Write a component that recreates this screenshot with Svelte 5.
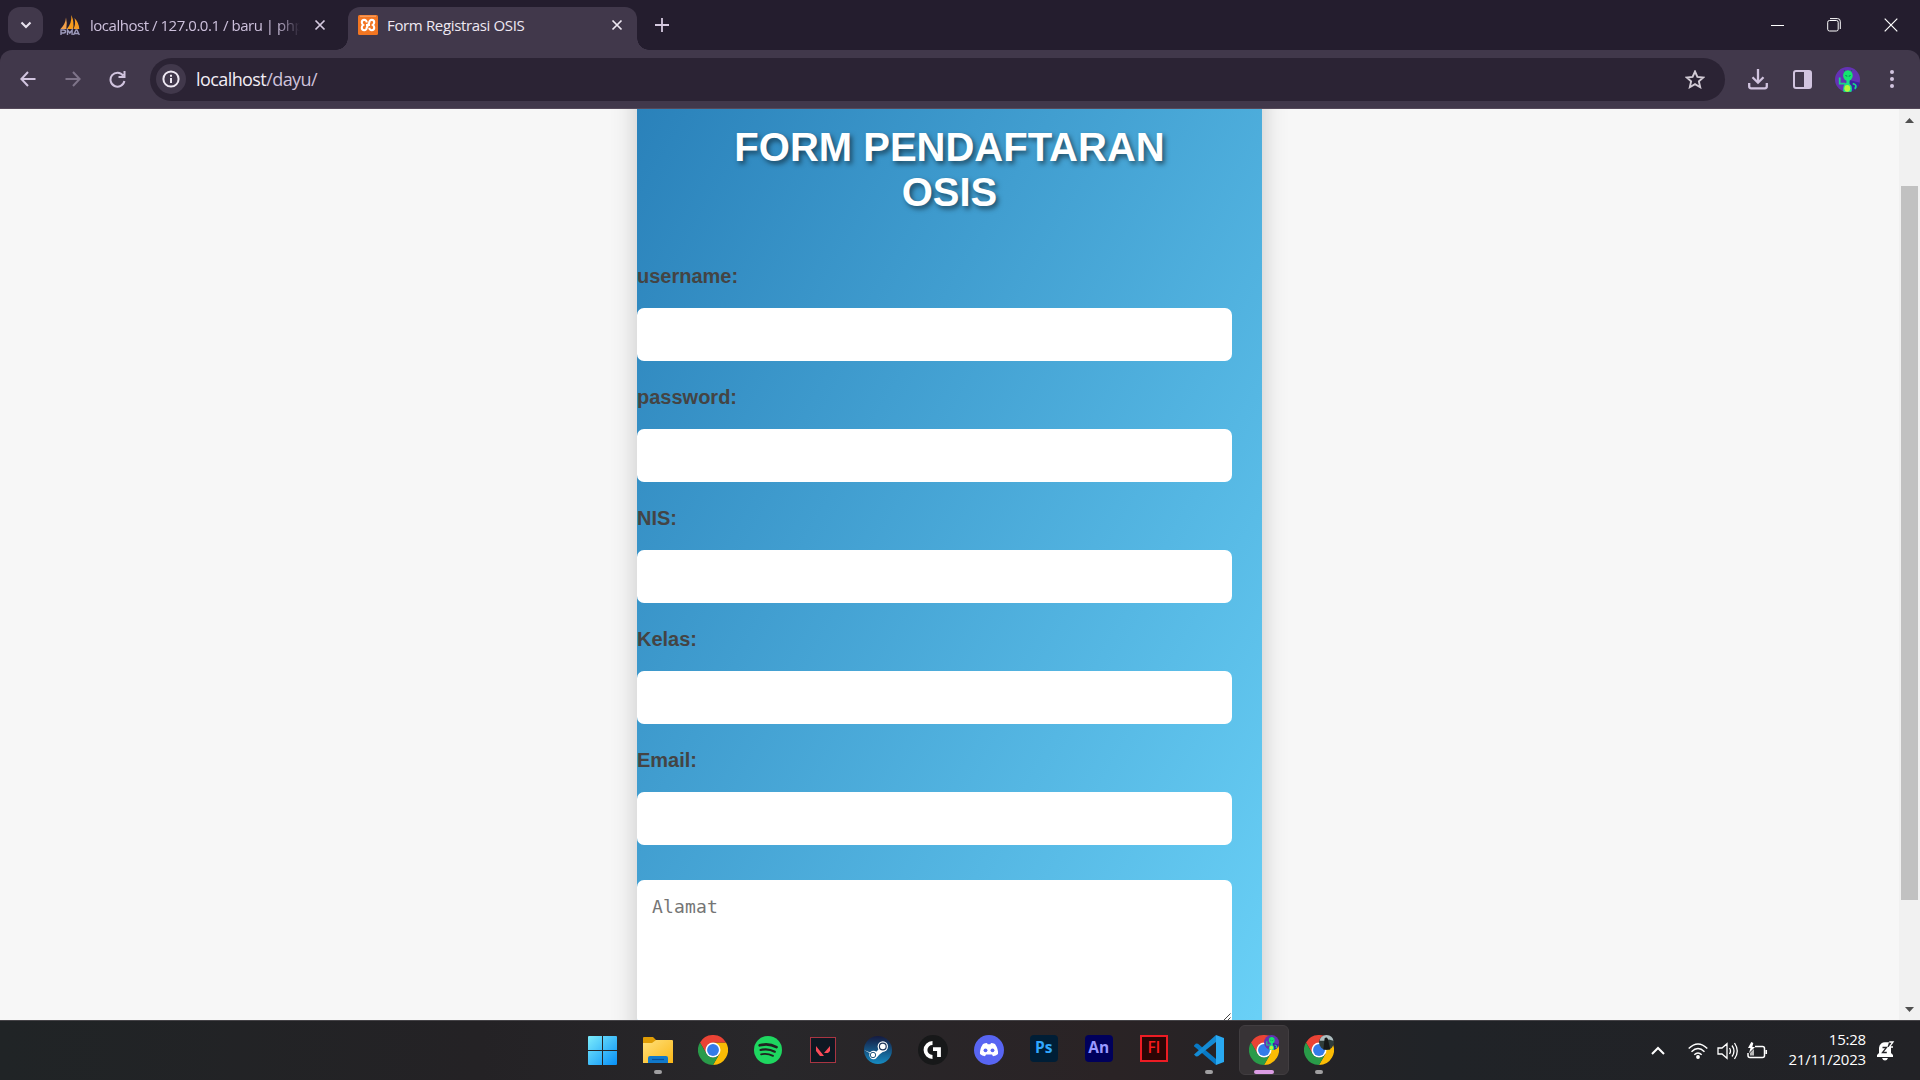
<script>
  const fields = ['username:', 'password:', 'NIS:', 'Kelas:', 'Email:'];
</script>

{#snippet alien()}
  <circle cx="12" cy="12" r="12" fill="#6432b4" />
  <path d="M12 12 24 15A12 12 0 0 1 12 24Z" fill="#3b22a0" />
  <path d="M4.5 10v6H10M17 16q5 1 2 5" fill="none" stroke="#19d786" stroke-width="1.7" />
  <ellipse cx="12.4" cy="8.2" rx="4.6" ry="5" fill="#13e56f" />
  <path d="M11 12h3v4q3 2 2 7.4a12 12 0 0 1-8 0Q7 17 11 15Z" fill="#18df86" />
  <ellipse cx="11.8" cy="20.5" rx="2.8" ry="3.3" fill="#b8f53a" />
  <path d="m10 8 1.8 1M15 8l-1.8 1M9.5 4 8.5 3M15.5 4l1-1" stroke="#087c58" />
{/snippet}

{#snippet chrome()}
  <svg width="30" height="30" viewBox="0 0 48 48">
    <path d="M24 12h20.8A24 24 0 0 1 24 48l10.4-18Z" fill="#fbbc05" />
    <path d="M3.2 12A24 24 0 0 1 44.8 12H24L13.6 18v12Z" fill="#ea4335" />
    <path d="M3.2 12 13.6 30A12 12 0 0 0 34.4 30L24 48A24 24 0 0 1 3.2 12Z" fill="#299b49" />
    <circle cx="24" cy="24" r="12" fill="#fff" />
    <circle cx="24" cy="24" r="9.5" fill="#347be9" />
  </svg>
{/snippet}

<div class="screen">
  <header class="tabs">
    <button class="tabsearch" aria-label="Search tabs"><svg width="12" height="12" viewBox="0 0 12 12"><path d="m1.5 3.5 4.5 4.5 4.5-4.5" fill="none" stroke="#e8e2ee" stroke-width="2.1" /></svg></button>
    <div class="tab first">
      <svg width="20" height="20" viewBox="0 0 20 20">
        <path d="M.5 14Q5.5 9 6 2.5q1.5 6 .3 11.5Z" fill="#f3a04a" /><path d="M6.8 14Q12 8 11.3 0 14.5 7 13 14Z" fill="#f89c1c" /><path d="M13.5 14q2.5-5 1-11 4.5 5 4.8 11Z" fill="#f59a24" />
        <path d="M1 20v-5h2.5q2 0 2 1.5t-2 1.5H1M7.5 20v-5l2.3 3 2.3-3v5M13.5 20l2.5-5h1l2.3 5M14.5 18.5h4" fill="none" stroke="#9d9abb" stroke-width="1.4" />
      </svg>
      <span class="tabtitle faded">localhost / 127.0.0.1 / baru | php</span>
      <svg class="x" width="12" height="12" viewBox="0 0 12 12"><path d="m1.5 1.5 9 9m0-9-9 9" stroke="#d5c9df" stroke-width="1.7" /></svg>
    </div>
    <div class="tab active">
      <svg width="20" height="20" viewBox="0 0 20 20">
        <rect width="20" height="20" rx="1.5" fill="#f37622" /><path d="M2 1.2h16" stroke="#f7ac76" />
        <path d="M8.7 7.4C8.7 4 3.8 4.2 3.8 7.3Q3.8 9 5.2 10 3.8 11 3.8 12.7c0 3.2 4.9 3.4 4.9 0L11.3 7.4C11.3 4 16.2 4.2 16.2 7.3q0 1.7-1.4 2.7 1.4 1 1.4 2.7c0 3.2-4.9 3.4-4.9 0M8 10h4" fill="none" stroke="#fff" stroke-width="2.1" />
      </svg>
      <span class="tabtitle">Form Registrasi OSIS</span>
      <svg class="x" width="12" height="12" viewBox="0 0 12 12"><path d="m1.5 1.5 9 9m0-9-9 9" stroke="#eee8f2" stroke-width="1.7" /></svg>
    </div>
    <svg class="plus" width="14" height="14" viewBox="0 0 14 14"><path d="M7 0v14M0 7h14" stroke="#d5c9df" stroke-width="1.8" /></svg>
    <div class="window">
      <svg width="13" height="13" viewBox="0 0 13 13"><path d="M0 6.5h13" stroke="#fff" /></svg>
      <svg width="14" height="14" viewBox="0 0 14 14" fill="none" stroke="#fff"><rect x=".7" y="2.5" width="10.5" height="10.5" rx="1.8" /><path d="M3 .6h7.5q2.8 0 2.8 2.8V11" /></svg>
      <svg width="14" height="14" viewBox="0 0 14 14"><path d="m.7.7 12.6 12.6m0-12.6L.7 13.3" stroke="#fff" stroke-width="1.2" /></svg>
    </div>
  </header>

  <nav class="toolbar">
    <svg width="16" height="16" viewBox="0 0 16 16" fill="none" stroke="#d1c4df" stroke-width="2"><path d="M15.5 8H2M8 1 1.4 8 8 15" /></svg>
    <svg width="16" height="16" viewBox="0 0 16 16" fill="none" stroke="#7e7489" stroke-width="2"><path d="M.5 8H14M8 1l6.6 7L8 15" /></svg>
    <svg class="reload" width="17" height="17" viewBox="0 0 17 17" fill="none" stroke="#d1c4df" stroke-width="2"><path d="M14.2 4.6A7 7 0 1 0 15.4 10M15.5 0v6H9.5" /></svg>
    <div class="address">
      <span class="info"><svg width="18" height="18" viewBox="0 0 18 18" fill="none" stroke="#eee8f2" stroke-width="2"><circle cx="9" cy="9" r="7.6" /><path d="M9 8v5M9 4.7v2" /></svg></span>
      <span class="url">localhost<i>/dayu/</i></span>
      <svg class="star" width="20" height="19" viewBox="0 0 20 19"><path d="m10 1.5 2.4 5.4 5.9.6-4.4 3.9 1.3 5.8-5.2-3-5.2 3 1.3-5.8L1.7 7.5l5.9-.6Z" fill="none" stroke="#d2cbd5" stroke-width="1.9" /></svg>
    </div>
    <div class="actions">
      <svg width="20" height="21" viewBox="0 0 20 21" fill="none" stroke="#d1c4df" stroke-width="2.3"><path d="M10 0v13M4.5 8.2l5.5 5.5 5.5-5.5M1.2 14v3.3q0 2 2 2h13.6q2 0 2-2V14" /></svg>
      <svg width="19" height="19" viewBox="0 0 19 19"><rect x="1" y="1" width="17" height="17" rx="2" fill="none" stroke="#d1c4df" stroke-width="2" /><path d="M11 1h6q1 0 1 1v15q0 1-1 1h-6Z" fill="#d1c4df" /></svg>
      <svg width="25" height="25" viewBox="0 0 24 24">{@render alien()}</svg>
      <svg class="dots" width="4" height="18" viewBox="0 0 4 18" fill="#d1c4df"><circle cx="2" cy="2" r="2" /><circle cx="2" cy="9" r="2" /><circle cx="2" cy="16" r="2" /></svg>
    </div>
  </nav>

  <main>
    <div class="viewport">
      <form>
        <h1>FORM PENDAFTARAN OSIS</h1>
        {#each fields as field, i}
          <label for="field{i}">{field}</label>
          <input id="field{i}" />
        {/each}
        <div class="area">
          <textarea placeholder="Alamat"></textarea>
          <svg class="grip" width="7" height="7" viewBox="0 0 7 7"><path d="M0 7 6.5.5M4 7l2.5-2.5" stroke="#444" /></svg>
        </div>
      </form>
    </div>
    <div class="scroll">
      <svg width="9" height="5" viewBox="0 0 9 5"><path d="M4.5 0 9 5H0Z" fill="#505050" /></svg>
      <div class="thumb"></div>
      <svg width="9" height="5" viewBox="0 0 9 5"><path d="M4.5 5 9 0H0Z" fill="#505050" /></svg>
    </div>
  </main>

  <footer>
    <div class="apps">
      <span class="app"><svg width="29" height="29" viewBox="0 0 29 29">
        <defs><linearGradient id="win" gradientUnits="userSpaceOnUse" x1="0" y1="0" x2="29" y2="29"><stop stop-color="#7cecfb" /><stop offset="1" stop-color="#0790f8" /></linearGradient></defs>
        <path d="M1 0h13v14H0V1q0-1 1-1ZM15 0h13q1 0 1 1v13H15ZM0 15h14v14H1q-1 0-1-1ZM15 15h14v13q0 1-1 1H15Z" fill="url(#win)" />
      </svg></span>
      <span class="app running"><svg width="30" height="30" viewBox="0 0 30 30">
        <defs><linearGradient id="fold" x2="1" y2="1"><stop stop-color="#ffe07b" /><stop offset="1" stop-color="#fbb716" /></linearGradient></defs>
        <path d="M0 3q0-1 1-1h9l3 3v5H0Z" fill="#df9c05" /><path d="M0 8h9l4-3h16q1 0 1 1v22H0Z" fill="url(#fold)" />
        <path d="M5 28v-5q0-2 2-2h16q2 0 2 2v5Z" fill="#1179cb" /><path d="M9 24.5h12" stroke="#074f9c" stroke-width="1.2" />
      </svg></span>
      <span class="app">{@render chrome()}</span>
      <span class="app"><svg width="28" height="28" viewBox="0 0 28 28"><circle cx="14" cy="14" r="14" fill="#1ed760" /><g fill="none" stroke="#202321" stroke-linecap="round"><path d="M5.7 9.3q9-2.4 16.8 1.8" stroke-width="2.7" /><path d="M6.6 14q7.5-2 14.2 1.7" stroke-width="2.2" /><path d="M7.1 18.3q6.3-1.4 11.9 1.6" stroke-width="1.8" /></g></svg></span>
      <span class="app"><svg width="26" height="26" viewBox="0 0 26 26"><rect x=".5" y=".5" width="25" height="25" fill="#0e1822" stroke="#a93542" /><path d="m6 9 8 10h-4l-4-5ZM20 9v5l-2 2h-4Z" fill="#fa4b59" /></svg></span>
      <span class="app"><svg width="28" height="28" viewBox="0 0 28 28">
        <defs><linearGradient id="steam" x2="0" y2="1"><stop stop-color="#151a40" /><stop offset="1" stop-color="#168bc2" /></linearGradient></defs>
        <circle cx="14" cy="14" r="14" fill="url(#steam)" /><path d="m0 14 10 4 4-4 4-6 5 5-7 5-3 3" fill="#fff" /><circle cx="9.5" cy="19" r="4.2" fill="#fff" /><circle cx="9" cy="19" r="2.7" fill="#fff" stroke="#245980" /><circle cx="18.8" cy="10.5" r="5.2" fill="#fff" /><circle cx="18.8" cy="10.5" r="3.4" fill="#fff" stroke="#1c3458" stroke-width="1.2" />
      </svg></span>
      <span class="app"><svg width="30" height="30" viewBox="0 0 30 30"><circle cx="15" cy="15" r="15" fill="#171819" /><path d="M14.5 8a7 7 0 0 0 0 14M15 14.2H21V22" fill="none" stroke="#fff" stroke-width="3.8" /></svg></span>
      <span class="app"><svg width="30" height="30" viewBox="0 0 30 30"><circle cx="15" cy="15" r="15" fill="#5865f2" /><path d="M9 9q2-1 4-1l.7 1.3h2.6L17 8q2 0 4 1 3.4 5 3 10-2 2-5 2.3L18 19.5h-6l-1 1.8Q8 21 6 19q-.4-5 3-10Z" fill="#fff" /><circle cx="11.5" cy="15.3" r="1.9" fill="#5865f2" /><circle cx="18.5" cy="15.3" r="1.9" fill="#5865f2" /></svg></span>
      <span class="app"><b class="adobe ps">Ps</b></span>
      <span class="app"><b class="adobe an">An</b></span>
      <span class="app"><b class="adobe fl">Fl</b></span>
      <span class="app running"><svg width="30" height="30" viewBox="0 0 30 30"><path d="m0 10.5 2-2 2 .2L22 24v6L.3 11.5Z" fill="#0879c5" /><path d="M0 19.5 22 0v7L4 21.3l-2 .2Z" fill="#148bd4" /><path d="m22 0 8 3v24l-8 3Z" fill="#29a9f1" /></svg></span>
      <span class="app current">{@render chrome()}<svg class="badge" width="15" height="15" viewBox="0 0 24 24">{@render alien()}</svg></span>
      <span class="app running">{@render chrome()}<svg class="badge" width="15" height="15" viewBox="0 0 24 24"><circle cx="12" cy="12" r="12" fill="#303d3b" /><path d="M1 9Q2 1 12 0q10 1 11 9l-7-2-7 2Z" fill="#aebdc0" /><path d="M9 5q5-3 6 5l3 13H7Z" fill="#161818" /></svg></span>
    </div>
    <div class="tray">
      <svg width="14" height="9" viewBox="0 0 14 9"><path d="m1 8 6-6 6 6" fill="none" stroke="#fff" stroke-width="2" /></svg>
      <svg width="20" height="16" viewBox="0 0 20 16" fill="none" stroke="#fff" stroke-width="1.4"><path d="M.7 5.5q9.3-9 18.6 0M3.5 8.7q6.5-6.5 13 0M6.3 11.7q3.7-3.5 7.4 0" /><circle cx="10" cy="14" r="1.2" fill="#fff" /></svg>
      <svg width="21" height="18" viewBox="0 0 21 18" fill="none" stroke="#fff" stroke-width="1.3"><path d="M1 6h4l5-4.3v14.6L5 12H1ZM12.5 6q2 3 0 6M15 3.5q4 5.5 0 11M17.5 1q5.5 8 0 16" /></svg>
      <svg width="21" height="18" viewBox="0 0 21 18" fill="none" stroke="#fff" stroke-width="1.5"><path d="M8 4.5h7.5q2 0 2 2v7q0 2-2 2H3q-2 0-2-2V11M19.3 8v4" /><path d="M4.3 0 1 6h2.5L2 11l6-6H5.3l1-4Z" fill="#fff" stroke="none" /><path d="M3 13.5V11l4-4v6.5Z" fill="#bbb" stroke="none" /></svg>
      <div class="clock"><span>15:28</span><span>21/11/2023</span></div>
      <svg width="18" height="20" viewBox="0 0 18 20"><path d="M0 16v-2l2-2V7a6 6 0 0 1 7-5.7h3L10.5 6H14v6l2 2v2ZM5 17h6q-1 2.5-3 2.5T5 17Z" fill="#fff" /><path d="M5.5 6.5h4l-4 5h4.3" fill="none" stroke="#252529" stroke-width="1.3" /><path d="M12.3 1H16l-3.7 5H16" fill="none" stroke="#fff" stroke-width="1.3" /></svg>
    </div>
  </footer>
</div>

<style>
  :global(body) { overflow: hidden; }
  * { box-sizing: border-box; }
  svg { display: block; flex: none; }
  .screen { width: 1920px; height: 1080px; display: grid; grid-template-rows: 50px 59px 911px 60px; overflow: hidden; background: #241d2e; font-family: "Open Sans", "Noto Sans", sans-serif; }
  .tabs { display: flex; align-items: center; padding-left: 8px; }
  .tabsearch { width: 35px; height: 36px; border: 0; border-radius: 12px; background: #41384b; display: grid; place-items: center; padding: 0; }
  .tab { display: flex; align-items: center; color: #cdc0dc; font-size: 15px; letter-spacing: -0.35px; }
  .first { width: 305px; height: 50px; padding: 0 22px 0 17px; }
  .tabtitle { white-space: nowrap; flex: 1; margin-left: 9px; }
  .faded { flex: none; width: 212px; margin-left: 10px; letter-spacing: -0.47px; mask-image: linear-gradient(90deg, #000 88%, transparent 99%); }
  .x { margin-left: auto; }
  .active { position: relative; align-self: flex-end; width: 289px; height: 43px; padding: 0 14px 7px 10px; background: #41384b; border-radius: 12px 12px 0 0; color: #eee8f2; }
  .active::before, .active::after { content: ''; position: absolute; bottom: 0; width: 12px; height: 12px; }
  .active::before { left: -12px; background: radial-gradient(circle at 0 0, transparent 11.5px, #41384b 12px); }
  .active::after { right: -12px; background: radial-gradient(circle at 100% 0, transparent 11.5px, #41384b 12px); }
  .plus { margin-left: 18px; }
  .window { margin-left: auto; display: flex; align-items: center; gap: 43px; padding-right: 22px; }
  .toolbar { background: #41384b; border-bottom: 1px solid #55495a; border-radius: 12px 12px 0 0; display: flex; align-items: center; padding: 0 0 0 20px; gap: 29px; }
  .reload { margin-left: -1px; }
  .address { width: 1575px; height: 43px; margin-left: -5px; border-radius: 22px; background: #2b2334; display: flex; align-items: center; padding: 0 20px 0 6px; }
  .info { width: 30px; height: 30px; border-radius: 50%; background: #41384b; display: grid; place-items: center; }
  .url { margin-left: 10px; font-size: 18px; letter-spacing: -0.58px; color: #f2edf5; }
  .url i { font-style: normal; color: #cfc2dc; }
  .star { margin-left: auto; }
  .actions { margin-left: -6px; display: flex; align-items: center; gap: 25px; }
  .actions svg:nth-child(3) { margin-left: -2px; }
  .dots { margin-left: 5px; }
  main { display: grid; grid-template-columns: 1899px 21px; background: #f7f7f7; overflow: hidden; }
  .viewport { display: flex; justify-content: center; overflow: hidden; height: 911px; }
  form { width: 625px; height: 1060px; margin-top: -32px; padding-top: 48px; flex: none; background: linear-gradient(120deg, #2980b9, #6dd5fa); box-shadow: 0 0 25px rgba(0, 0, 0, 0.2); font-family: "Liberation Sans", Arial, sans-serif; }
  h1 { width: 500px; margin: 0 auto 50px; color: #fff; text-align: center; font-size: 40px; line-height: 45px; text-shadow: 2.5px 2.5px 5px rgba(0, 0, 0, 0.5); }
  label { display: block; height: 23px; margin-bottom: 20px; color: #444; font-size: 20px; line-height: 23px; font-weight: bold; }
  input, textarea { display: block; width: 595px; border: 0; border-radius: 7px; background: #fff; outline: 0; }
  input { height: 53px; margin-bottom: 25px; }
  .area { position: relative; width: 595px; margin-top: 35px; }
  textarea { height: 145px; padding: 15px; resize: none; font: 18px/24px "DejaVu Sans Mono", monospace; letter-spacing: 0.15px; }
  textarea::placeholder { color: #757575; }
  .grip { position: absolute; right: 1px; bottom: 5px; }
  .scroll { display: flex; flex-direction: column; align-items: center; background: #f1f1f1; padding: 9px 0 8px; justify-content: space-between; }
  .thumb { width: 17px; height: 714px; margin-top: -44px; background: #c1c1c1; }
  footer { display: grid; grid-template-columns: 585px 1fr auto; background: linear-gradient(90deg, #202426, #242225 25%, #28272a 40%, #2a2325 58%, #202327 75%, #222226); border-top: 1px solid #454347; }
  .apps { grid-column: 2; display: flex; gap: 5.08px; margin-left: -7px; }
  .app { position: relative; width: 50px; height: 50px; margin-top: 4px; display: grid; place-items: center; border-radius: 6px; }
  .app:first-child { padding-right: 1px; }
  .running::after, .current::after { content: ''; position: absolute; bottom: 1px; width: 8px; height: 4px; border-radius: 2px; background: #a09fa1; }
  .current { background: #373336; border: 1px solid #413d40; }
  .current::after { width: 20px; background: #dc9de5; bottom: 0; }
  .badge { position: absolute; right: 10px; top: 10px; }
  .current .badge { right: 9px; top: 9px; }
  .adobe { width: 28px; height: 27px; margin-bottom: 3px; border-radius: 4px; display: grid; place-items: center; font: 700 15.5px/1 "Open Sans", sans-serif; padding-bottom: 1px; }
  .ps { background: #001e36; color: #31a8ff; }
  .an { background: #00005b; color: #9999ff; }
  .fl { background: #2b0505; color: #f61c1c; border: 2px solid #ed1c24; border-radius: 0; font-weight: 600; }
  .tray { display: flex; align-items: center; padding-right: 25px; }
  .tray svg:nth-child(2) { margin-left: 23px; }
  .tray svg:nth-child(3), .tray svg:nth-child(4) { margin-left: 9px; }
  .clock { width: 79px; margin: 0 11px 3px 19px; display: flex; flex-direction: column; align-items: flex-end; color: #fff; font-size: 15px; line-height: 20px; letter-spacing: -0.2px; }
</style>
